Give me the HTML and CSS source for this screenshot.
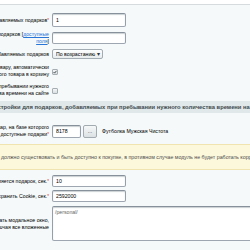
FILE: index.html
```html
<!DOCTYPE html>
<html>
<head>
  <title>Настройки модуля подарков</title>
  <link rel="stylesheet" href="styles.css">
</head>
<body>
  <div class="top"></div>

  <div class="panel">
    <div class="row row-first">
      <div class="lbl"><span>Количество добавляемых подарков<span class="req">*</span></span></div>
      <input class="field field-tall" type="text" value="1">
    </div>

    <div class="row">
      <div class="lbl"><span>Название подарков [<a href="#">доступные</a><br><a href="#">поля</a>]</span></div>
      <input class="field" type="text" value="">
    </div>

    <div class="row">
      <div class="lbl"><span>Сортировка добавляемых подарков</span></div>
      <div class="select-wrap">
        <select class="select">
          <option>По возрастанию</option>
          <option>По убыванию</option>
        </select>
        <span class="arrow">&#9662;</span>
      </div>
    </div>

    <div class="row row-gap5">
      <div class="lbl"><span>Добавлять подарок к товару, автоматически<br>при добавлении первого товара в корзину</span></div>
      <span class="chk checked">
        <svg width="4" height="4" viewBox="0 0 4 4"><path d="M0.5 2 L1.6 3.1 L3.5 0.8" fill="none" stroke="#3b4447" stroke-width="0.9"/></svg>
      </span>
    </div>

    <div class="row row-gap5">
      <div class="lbl"><span>Добавлять подарок при пребывании нужного<br>количества времени на сайте</span></div>
      <span class="chk"></span>
    </div>

    <div class="heading">Настройки для подарков, добавляемых при пребывании нужного количества времени на сайте</div>

    <div class="row row-gap11">
      <div class="lbl"><span>Товар, на базе которого<br>будут созданы доступные подарки<span class="req">*</span></span></div>
      <div class="product">
        <input class="field field-short" type="text" value="8178">
        <button class="btn-dots">...</button>
        <span class="product-name">Футболка Мужская Чистота</span>
      </div>
    </div>

    <div class="notice">должно существовать и быть доступно к покупке, в противном случае модуль не будет работать корректно</div>

    <div class="row row-gap5">
      <div class="lbl"><span>Через сколько добавляется подарок, сек.<span class="req">*</span></span></div>
      <input class="field" type="text" value="10">
    </div>

    <div class="row row-gap3">
      <div class="lbl"><span>Сколько хранить Cookie, сек.<span class="req">*</span></span></div>
      <input class="field" type="text" value="2592000">
    </div>

    <div class="row">
      <div class="lbl"><span>Страницы, где не показывать модальное окно,<br>одна на строку, включая все вложенные</span></div>
      <textarea class="area">/personal/</textarea>
    </div>
  </div>
</body>
</html>
```

FILE: styles.css
```css
body {
  margin: 0;
  width: 250px;
  height: 250px;
  overflow: hidden;
  font-family: "Liberation Sans", Arial, sans-serif;
  font-size: 5.2px;
  color: #000;
  background: #fff;
}

.top {
  height: 4px;
  background: #fff;
  border-bottom: 1px solid #d6dcdd;
}

.panel {
  height: 245px;
  padding-top: 8px;
  box-sizing: border-box;
  background: #f5f9f9;
  display: flex;
  flex-direction: column;
}

.row {
  display: grid;
  grid-template-columns: 49px 1fr;
  column-gap: 3px;
  align-items: center;
  line-height: 7px;
  margin-top: 4px;
}

.row-first { margin-top: 0; }
.row-gap3 { margin-top: 3px; }
.row-gap5 { margin-top: 5px; }
.row-gap11 { margin-top: 11px; }

.lbl {
  display: flex;
  justify-content: flex-end;
  white-space: nowrap;
  text-align: right;
}

.lbl a {
  color: #2675d7;
}

.req {
  color: #e02727;
  vertical-align: top;
  font-size: 4.5px;
}

.field {
  width: 74px;
  height: 12px;
  box-sizing: border-box;
  margin: 0;
  padding: 0 3px;
  border: 1px solid;
  border-color: #87919c #959ea9 #9ea7b1 #959ea9;
  border-radius: 2px;
  background: #fff;
  box-shadow: inset 0 1px 1px rgba(180, 188, 191, 0.7);
  font: inherit;
  color: #000;
}

.field-tall { height: 14px; }
.field-short { width: 29px; height: 13px; }

.select-wrap {
  position: relative;
  width: 51px;
  height: 10px;
}

.select {
  appearance: none;
  width: 51px;
  height: 10px;
  margin: 0;
  padding: 0 3px;
  border: 1px solid #a3abb3;
  border-radius: 2px;
  background: linear-gradient(#fdfefe, #e8eced);
  font: inherit;
  color: #000;
}

.arrow {
  position: absolute;
  right: 3px;
  top: 1px;
  font-size: 6px;
  line-height: 8px;
  color: #333;
}

.chk {
  width: 6px;
  height: 6px;
  box-sizing: border-box;
  margin-top: 1px;
  border: 1px solid #a5aeb3;
  border-radius: 1px;
  background: linear-gradient(#f4f6f6, #d9dfe1);
  display: flex;
  align-items: center;
  justify-content: center;
}

.heading {
  margin-top: 4px;
  height: 12px;
  line-height: 12px;
  padding-left: 2px;
  background: #e0e8ea;
  color: #3f4b4e;
  font-size: 5.8px;
  font-weight: bold;
  white-space: nowrap;
  text-indent: -12px;
}

.product {
  display: flex;
  align-items: center;
}

.btn-dots {
  width: 14px;
  height: 13px;
  margin: 0 0 0 2px;
  padding: 0;
  border: 1px solid #a2abb0;
  border-radius: 2px;
  background: linear-gradient(#f6f8f8, #dbe1e3);
  font: inherit;
  color: #333;
}

.product-name {
  margin-left: 5px;
  white-space: nowrap;
}

.notice {
  margin-top: 6px;
  height: 26px;
  line-height: 25px;
  box-sizing: border-box;
  padding-left: 1px;
  background: #fcf8dc;
  border-top: 1px solid #f0e5b0;
  border-bottom: 1px solid #f0e5b0;
  color: #4e4e4e;
  font-size: 5.3px;
  white-space: nowrap;
}

.area {
  width: 220px;
  height: 35px;
  box-sizing: border-box;
  margin: 0;
  padding: 2px;
  border: 1px solid;
  border-color: #87919c #959ea9 #9ea7b1 #959ea9;
  border-radius: 2px;
  background: #fff;
  box-shadow: inset 0 1px 1px rgba(180, 188, 191, 0.7);
  font: inherit;
  color: #666;
  resize: none;
}
```
